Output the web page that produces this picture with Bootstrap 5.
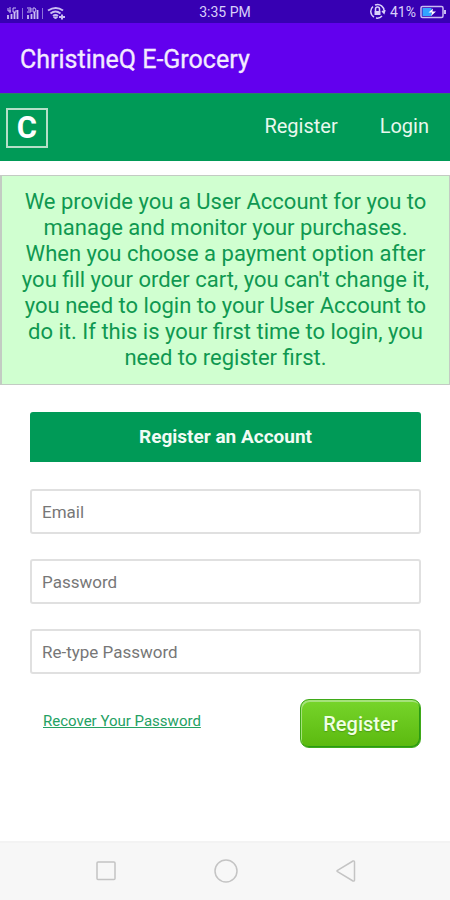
<!DOCTYPE html>
<html lang="en">
<head>
<meta charset="utf-8">
<meta name="viewport" content="width=device-width, initial-scale=1">
<title>ChristineQ E-Grocery</title>
<link href="https://cdn.jsdelivr.net/npm/bootstrap@5.3.0/dist/css/bootstrap.min.css" rel="stylesheet">
<style>
  body { font-family: Roboto, sans-serif; background: #fff; }
  .status-bar { background: #3700b3; color: #d9d0fa; height: 23px; font-size: 14px; line-height: 24px; }
  .status-side { flex: 1 1 0; }
  .app-bar { background: #6200ee; color: #f3ebff; height: 70px; padding-top: 3px; }
  .app-title { font-size: 25px; line-height: 32px; font-weight: 400; -webkit-text-stroke: .3px; }
  .site-nav { background: #009a57; height: 68px; border-top: 1px solid #2b8066; padding: 0 21px 0 6px; }
  .site-logo { width: 42px; height: 40px; border: 2px solid #b5dfc8; color: #fff; font-size: 31px; line-height: 36px; font-weight: 700; }
  .site-links { gap: 42px; font-size: 20px; line-height: 26px; padding-bottom: 4px; }
  .site-links a { color: #e8f8ee; }
  .notice { background: #d0ffd0; color: #0f9850; border: 1px solid #c3cbc3; border-left-width: 2px; font-size: 22px; line-height: 26px; padding: 13px 12px; margin-top: 14px; }
  .account-form { padding: 27px 29px 0 30px; gap: 25px; }
  .form-title { background: #009a57; color: #f1fbf4; height: 50px; margin-bottom: 2px; border-radius: 3px 3px 0 0; font-size: 19px; line-height: 50px; }
  .field { height: 45px; padding: 0 10px; border: 2px solid #e0e0e0; border-radius: 3px; font-size: 17px; }
  .field::placeholder { color: #777; opacity: 1; }
  .recover { color: #24a163; font-size: 15px; line-height: 20px; margin-left: 13px; }
  .submit-btn { width: 121px; height: 49px; border: 1px solid #3faa19; border-radius: 9px; color: #efffe2; background: linear-gradient(#77d52b, #5bb90f); box-shadow: inset 1px 2px 0 #a5e27b, inset -1px -1px 0 #289a13; font-size: 20px; font-weight: 500; text-shadow: 0 1px 1px #4d9e14; }
  .system-nav { background: #f7f7f7; height: 59px; border-top: 2px solid #f3f3f3; padding: 0 44px 2px 46px; }
  .system-nav button { width: 120px; }
</style>
</head>
<body>
<div class="d-flex flex-column min-vh-100">
  <div class="status-bar d-flex align-items-center px-1">
    <div class="status-side d-flex">
      <svg width="64" height="20" viewBox="0 0 64 20" aria-hidden="true" fill="none" stroke="#c9bcf2">
        <path d="M4 13v4M7.500 12v5M10.500 10v7M13.500 8v9" stroke-width="1.800"/>
        <path d="M18.500 6v11M38.500 6v11" stroke="#8c72d8"/>
        <path d="M4 6v3h3M6 5v6M12 6h-3v4h3v-2M23 6h4v2h-3m3 0v2h-4M29 6h2l1 2-1 2h-2z"/>
        <path d="M24 13v4M27.500 12v5M30.500 10v7M33.500 8v9" stroke-width="1.800"/>
        <path d="M44 8.500q8-5 15 0M46.500 11.500q5-4 10 0M49 14q2.500-2 5 0" stroke-width="2"/>
        <path d="M51.500 17l-2-2h4z" fill="#c9bcf2"/>
        <path d="M55 15h6M58 12.500v5" stroke-width="2"/>
      </svg>
    </div>
    <span>3:35 PM</span>
    <div class="status-side d-flex align-items-center justify-content-end gap-1">
      <svg width="17" height="17" viewBox="0 0 17 17" aria-hidden="true" fill="none" stroke="#d9d0fa" stroke-width="1.500">
        <path d="M5 14A6.500 6.500 0 0 1 4 3.500M6 2a6.500 6.500 0 0 1 9 7M13 13a6.500 6.500 0 0 1-6 2M13 8l2 2 1-3"/>
        <path d="M6.500 8V6a2 2 0 0 1 4 0v2"/><path d="M5.500 8h6v4h-6z" fill="#d9d0fa" stroke="none"/>
      </svg>
      <span>41%</span>
      <svg width="26" height="14" viewBox="0 0 26 14" aria-hidden="true">
        <rect x="1" y="1.500" width="22" height="11" rx="1.500" fill="none" stroke="#c9bcf2" stroke-width="1.500"/>
        <path d="M24 5h2v4h-2z" fill="#c9bcf2"/>
        <path d="M2.500 3h9v8h-9z" fill="#32a4ff"/>
        <path d="M13 3.500 8.500 7.500h3.500L11 11l5-4.500h-3.500z" fill="#fff"/>
      </svg>
    </div>
  </div>

  <header class="app-bar d-flex align-items-center">
    <h1 class="app-title mb-0 px-3 ms-1">ChristineQ E-Grocery</h1>
  </header>

  <nav class="site-nav d-flex align-items-center justify-content-between" aria-label="Site">
    <a class="site-logo d-block text-center text-decoration-none" href="#">C</a>
    <div class="site-links d-flex">
      <a class="text-decoration-none" href="#register">Register</a>
      <a class="text-decoration-none" href="#login">Login</a>
    </div>
  </nav>

  <main class="flex-grow-1">
    <p class="notice text-center mb-0">We provide you a User Account for you to manage and monitor your purchases. When you choose a payment option after you fill your order cart, you can't change it, you need to login to your User Account to do it. If this is your first time to login, you need to register first.</p>

    <form class="account-form d-flex flex-column" id="register">
      <h2 class="form-title fw-bold text-center">Register an Account</h2>
      <input class="field form-control" type="email" placeholder="Email" aria-label="Email">
      <input class="field form-control" type="password" placeholder="Password" aria-label="Password">
      <input class="field form-control" type="password" placeholder="Re-type Password" aria-label="Re-type Password">
      <div class="d-flex justify-content-between align-items-start">
        <a class="recover mt-2 pt-1" href="#recover">Recover Your Password</a>
        <button class="submit-btn" type="submit">Register</button>
      </div>
    </form>
  </main>

  <footer class="system-nav d-flex justify-content-between">
    <button class="btn p-0 border-0" type="button" aria-label="Recent apps">
      <svg width="24" height="24" viewBox="0 0 24 24" fill="none" stroke="#c4c4c4" stroke-width="1.500"><rect x="3" y="3" width="18" height="17.500" rx="1"/></svg>
    </button>
    <button class="btn p-0 border-0" type="button" aria-label="Home">
      <svg width="24" height="24" viewBox="0 0 24 24" fill="none" stroke="#c4c4c4" stroke-width="1.500"><circle cx="12" cy="12" r="11"/></svg>
    </button>
    <button class="btn p-0 border-0" type="button" aria-label="Back">
      <svg width="24" height="24" viewBox="0 0 24 24" fill="none" stroke="#c4c4c4" stroke-width="1.500" stroke-linejoin="round"><path d="M3.500 11.300Q2.500 12 3.500 12.700L19 22q1.500.5 1.500-1V3q0-1.500-1.500-1z"/></svg>
    </button>
  </footer>
</div>
<script src="https://cdn.jsdelivr.net/npm/bootstrap@5.3.0/dist/js/bootstrap.bundle.min.js"></script>
</body>
</html>
